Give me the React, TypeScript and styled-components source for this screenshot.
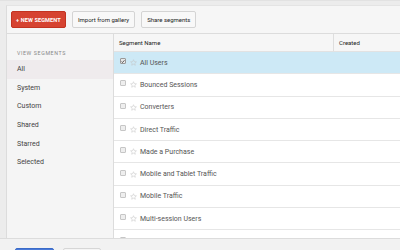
import React from "react";
import styled, { createGlobalStyle } from "styled-components";

const Global = createGlobalStyle`
  html, body { margin: 0; padding: 0; background: #ececec; }
  body { font-family: Roboto, "Liberation Sans", Arial, sans-serif; color: #333; }
  * { box-sizing: border-box; }
`;

const Page = styled.div`
  width: 400px;
  height: 250px;
  overflow: hidden;
  padding: 4px 0 0 6px;
  background: #ececec;
  border-top: 1px solid #e2e2e2;
`;

const Panel = styled.div`
  background: #f6f6f6;
  border-left: 1px solid #dcdcdc;
  border-top: 1px solid #e4e4e4;
  height: 260px;
  display: flex;
  flex-direction: column;
`;

const Toolbar = styled.div`
  display: flex;
  align-items: center;
  gap: 6px;
  height: 27px;
  padding: 0 4px;
  flex-shrink: 0;
`;

const Button = styled.button<{ $primary?: boolean }>`
  height: 17px;
  padding: 0 ${(p) => (p.$primary ? 4 : 5)}px;
  font-family: inherit;
  font-size: ${(p) => (p.$primary ? 5.6 : 6)}px;
  font-weight: ${(p) => (p.$primary ? 700 : 400)};
  letter-spacing: ${(p) => (p.$primary ? "0.1px" : "0")};
  color: ${(p) => (p.$primary ? "#fff" : "#222")};
  background: ${(p) => (p.$primary ? "#d64331" : "#f8f8f8")};
  border: 1px solid ${(p) => (p.$primary ? "#c23321" : "#d4d4d4")};
  border-radius: 2px;
  white-space: nowrap;
  cursor: pointer;
`;

const Body = styled.div`
  display: flex;
  border-top: 1px solid #dcdcdc;
  height: 205px;
  flex-shrink: 0;
`;

const Sidebar = styled.div`
  width: 107px;
  flex-shrink: 0;
  background: #f5f5f5;
  border-right: 1px solid #dcdcdc;
  padding-top: 16px;
`;

const SideLabel = styled.div`
  font-size: 5.3px;
  letter-spacing: 0.6px;
  color: #888;
  padding-left: 10px;
  height: 10px;
`;

const SideItem = styled.div<{ $active?: boolean }>`
  height: 18.6px;
  display: flex;
  align-items: center;
  padding-left: 10px;
  font-size: 7px;
  color: #444;
  background: ${(p) => (p.$active ? "#efebed" : "transparent")};
`;

const Table = styled.div`
  flex: 1;
  display: flex;
  flex-direction: column;
  overflow: hidden;
`;

const HeadRow = styled.div`
  display: flex;
  height: 18px;
  flex-shrink: 0;
  background: #f6f6f6;
  border-bottom: 1px solid #e2e2e2;
  font-size: 6px;
  color: #222;
`;

const HeadCell = styled.div<{ $w?: number }>`
  ${(p) => (p.$w ? `width: ${p.$w}px; flex-shrink: 0;` : "flex: 1;")}
  display: flex;
  align-items: center;
  padding-left: 5px;
  & + & { border-left: 1px solid #dedede; }
`;

const Row = styled.div<{ $selected?: boolean }>`
  height: 22.3px;
  display: flex;
  align-items: center;
  padding-left: 6px;
  background: ${(p) => (p.$selected ? "#cde9f6" : "#fff")};
  border-bottom: 1px solid #e6e6e6;
  font-size: 7px;
  color: #555;
  flex-shrink: 0;
`;

const Check = styled.span<{ $on?: boolean }>`
  width: 6px;
  height: 6px;
  border: 1px solid ${(p) => (p.$on ? "#999" : "#c6c6c6")};
  background: ${(p) => (p.$on ? "#e8e8e8" : "#eeeeee")};
  border-radius: 1px;
  margin-top: -3px;
  display: flex;
  align-items: center;
  justify-content: center;
`;

const StarWrap = styled.span`
  margin-left: 4px;
  margin-right: 3px;
  display: flex;
`;

const Footer = styled.div`
  border-top: 1px solid #dcdcdc;
  background: #f2f2f2;
  display: flex;
  gap: 9px;
  padding: 9px 0 0 8px;
  flex: 1;
  margin-left: -7px;
  padding-left: 15px;
`;

const FootBtn = styled.div<{ $blue?: boolean }>`
  width: ${(p) => (p.$blue ? 39 : 38)}px;
  height: 14px;
  border-radius: 2px;
  background: ${(p) => (p.$blue ? "#4a7ad8" : "#f5f5f5")};
  border: 1px solid ${(p) => (p.$blue ? "#3b6bc8" : "#d6d6d6")};
`;

const Star = () => (
  <svg width="7" height="7" viewBox="0 0 24 24">
    <path
      d="M12 2.5l2.9 6.6 7.1.6-5.4 4.7 1.6 7-6.2-3.7-6.2 3.7 1.6-7L2 9.7l7.1-.6z"
      fill="none"
      stroke="#c4c4c4"
      strokeWidth="1.8"
      strokeLinejoin="round"
    />
  </svg>
);

const Tick = () => (
  <svg width="5" height="5" viewBox="0 0 10 10">
    <path d="M1.5 5.2l2.2 2.3L8.6 2" fill="none" stroke="#333" strokeWidth="2" />
  </svg>
);

const sideItems = ["All", "System", "Custom", "Shared", "Starred", "Selected"];
const segments = [
  "All Users",
  "Bounced Sessions",
  "Converters",
  "Direct Traffic",
  "Made a Purchase",
  "Mobile and Tablet Traffic",
  "Mobile Traffic",
  "Multi-session Users",
  "New Users",
];

export default function App() {
  return (
    <>
      <Global />
      <Page>
        <Panel>
          <Toolbar>
            <Button $primary>+ NEW SEGMENT</Button>
            <Button>Import from gallery</Button>
            <Button>Share segments</Button>
          </Toolbar>
          <Body>
            <Sidebar>
              <SideLabel>VIEW SEGMENTS</SideLabel>
              {sideItems.map((s, i) => (
                <SideItem key={s} $active={i === 0}>
                  {s}
                </SideItem>
              ))}
            </Sidebar>
            <Table>
              <HeadRow>
                <HeadCell $w={219}>Segment Name</HeadCell>
                <HeadCell>Created</HeadCell>
              </HeadRow>
              {segments.map((s, i) => (
                <Row key={s} $selected={i === 0}>
                  <Check $on={i === 0}>{i === 0 && <Tick />}</Check>
                  <StarWrap>
                    <Star />
                  </StarWrap>
                  {s}
                </Row>
              ))}
            </Table>
          </Body>
          <Footer>
            <FootBtn $blue />
            <FootBtn />
          </Footer>
        </Panel>
      </Page>
    </>
  );
}
